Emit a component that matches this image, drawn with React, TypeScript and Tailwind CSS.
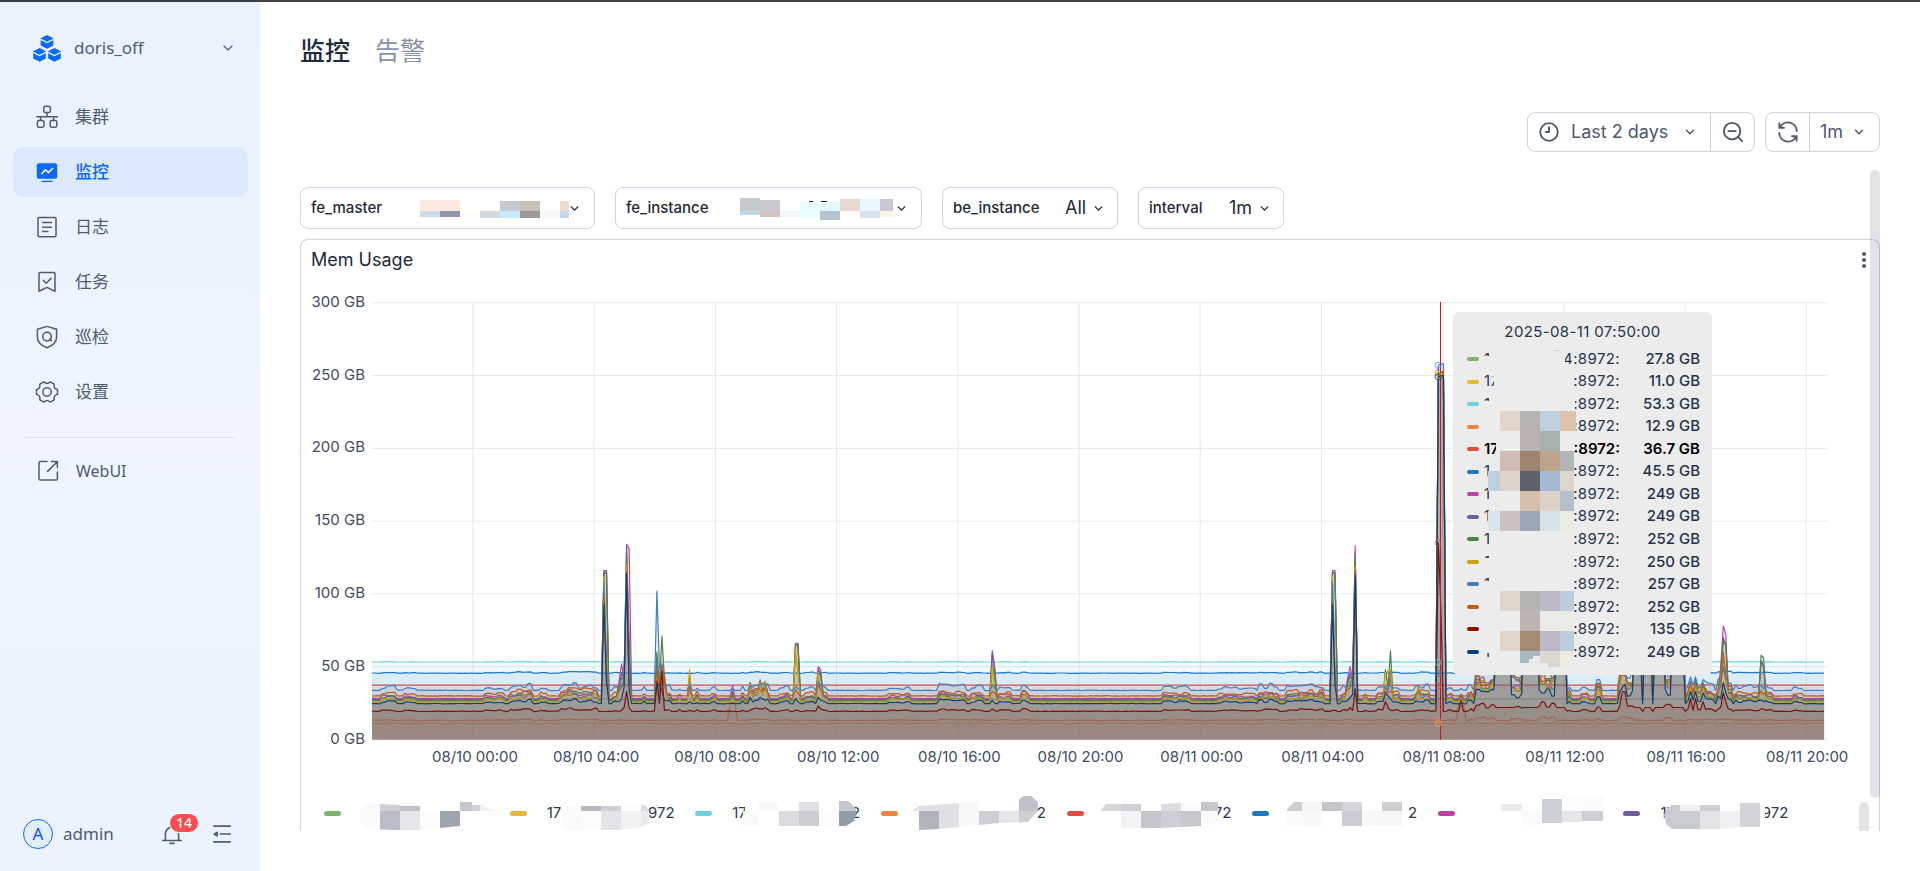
import { useId } from 'react';
import type { ReactNode } from 'react';
import { ChevronDown } from 'lucide-react';

type Block = [x: number, y: number, w: number, h: number, fill: string];

/* ---------- Masked text ---------- */

interface MosaicProps {
  blocks: Block[];
  width: number;
  height: number;
  outline?: string;
  className?: string;
}

function Mosaic({ blocks, width, height, outline, className = '' }: MosaicProps) {
  const id = useId();
  return (
    <svg
      width={width}
      height={height}
      viewBox={`0 0 ${width} ${height}`}
      className={`overflow-visible ${className}`}
      shapeRendering="crispEdges"
      aria-hidden="true"
    >
      {outline && (
        <clipPath id={id}>
          <polygon points={outline} />
        </clipPath>
      )}
      <g clipPath={outline ? `url(#${id})` : undefined}>
        {blocks.map(([x, y, w, h, fill], i) => (
          <rect key={i} x={x} y={y} width={w} height={h} fill={fill} />
        ))}
      </g>
    </svg>
  );
}

/* ---------- Sidebar ---------- */

function Icon({ children, size = 24, width = 1.5 }: { children: ReactNode; size?: number; width?: number }) {
  return (
    <svg
      width={size}
      height={size}
      viewBox="0 0 24 24"
      fill="none"
      stroke="currentColor"
      strokeWidth={width}
      strokeLinecap="round"
      strokeLinejoin="round"
      className="shrink-0"
      aria-hidden="true"
    >
      {children}
    </svg>
  );
}

const navItems = [
  {
    label: '集群',
    icon: (
      <Icon>
        <rect x="8.8" y="1.2" width="6.6" height="6.4" rx="1.4" />
        <path d="M12 7.6v4M1.8 11.8h20.6M5.6 11.8v3.6M18.6 11.8v3.6" />
        <rect x="2.4" y="15.6" width="6.6" height="6.6" rx="1.4" />
        <rect x="15.2" y="15.6" width="6.6" height="6.6" rx="1.4" />
      </Icon>
    ),
  },
  {
    label: '监控',
    active: true,
    icon: (
      <Icon>
        <rect x="1.8" y="3.3" width="20.4" height="15.4" rx="2" fill="currentColor" stroke="none" />
        <path d="M7 21.4h10" strokeWidth="1.4" />
        <path d="M7 13.6l3.4-3.8 3.2 2.8 4-4.2" stroke="#fff" />
      </Icon>
    ),
  },
  {
    label: '日志',
    icon: (
      <Icon>
        <rect x="3" y="2.4" width="18" height="19.4" rx="1.2" />
        <path d="M7.6 7.6h8.8M7.6 12.2h8.8M7.6 16.6h5.2" />
      </Icon>
    ),
  },
  {
    label: '任务',
    icon: (
      <Icon>
        <path d="M4 21.2V3.6c0-.7.5-1.2 1.2-1.2h13.6c.7 0 1.2.5 1.2 1.2v17.6l-8-3.8z" />
        <path d="M8.4 10.4l2.8 2.8 4.8-4.8" />
      </Icon>
    ),
  },
  {
    label: '巡检',
    icon: (
      <Icon>
        <path d="M12 1.4l9.6 2.8v8c0 5-4.2 8.4-9.6 10.6C6.6 20.6 2.4 17.2 2.4 12.2v-8z" />
        <circle cx="12" cy="11.6" r="4.3" />
        <path d="M14.8 13.8l1.6 2" />
      </Icon>
    ),
  },
  {
    label: '设置',
    icon: (
      <Icon>
        <circle cx="12" cy="12" r="4.2" />
        <path d="M8.8 1.9c1 .8 1.9 1.5 3.2 1.5s2.2-.7 3.2-1.5l4 2.3c-.2 1.300-.3 2.400.3 3.500.7 1.100 1.800 1.500 3 2v4.600c-1.200.5-2.300.9-3 2-.6 1.100-.5 2.200-.3 3.500l-4 2.300c-1-.8-1.900-1.500-3.200-1.500s-2.200.7-3.200 1.500l-4-2.300c.2-1.300.3-2.400-.3-3.500-.7-1.100-1.800-1.500-3-2V9.700c1.200-.5 2.300-.9 3-2 .6-1.100.5-2.200.3-3.500z" />
      </Icon>
    ),
  },
];

function Logo() {
  return (
    <svg width="28" height="27" viewBox="0 0 28 27" aria-hidden="true">
      {[
        [14, 7],
        [6.5, 20],
        [21.5, 20],
      ].map(([x, y]) => (
        <g key={x} transform={`translate(${x} ${y})`}>
          <path d="M0-7L6.300-3.700V3.500L0 6.800L-6.300 3.500V-3.700z" fill="#0b68ff" />
          <path d="M-6.300-2.600L0 .5L6.300-2.600" fill="none" stroke="#edf4fe" strokeWidth="1.3" />
        </g>
      ))}
    </svg>
  );
}

function Sidebar() {
  return (
    <aside className="flex w-[260px] shrink-0 flex-col bg-linear-to-b from-[#eaf2fe] via-[#f0f5ff] to-[#ebf3fe] text-[17px] text-[#4e5b73]">
      <button type="button" className="mt-[22px] flex h-12 items-center pr-6 pl-[33px]">
        <Logo />
        <span className="ml-[13px] flex-1 text-left">doris_off</span>
        <ChevronDown size={16} strokeWidth={1.8} />
      </button>

      <nav className="mt-5 flex flex-col gap-[5px] pr-3 pl-[13px]">
        {navItems.map((item) => (
          <a
            key={item.label}
            href="#"
            className={`flex h-[50px] items-center gap-4 rounded-[10px] pl-[22px] ${
              item.active ? 'bg-[#dce8fc] font-medium text-[#0b68ff]' : ''
            }`}
          >
            {item.icon}
            {item.label}
          </a>
        ))}
      </nav>

      <hr className="mx-[25px] mt-5 border-[#dbe1ec]" />

      <a href="#" className="mt-2 flex h-[50px] items-center gap-4 pl-9 text-base">
        <Icon>
          <path d="M11 2.6H4.2c-.7 0-1.200.5-1.200 1.200v16c0 .7.5 1.200 1.200 1.200h16c.7 0 1.200-.5 1.200-1.200V13" />
          <path d="M15.4 2.6h6v6M21 3l-9.400 9.400" />
        </Icon>
        WebUI
      </a>

      <div className="mt-auto mb-[19px] flex h-9 items-center pr-[27px] pl-[23px]">
        <span className="flex size-[30px] items-center justify-center rounded-full border border-[#0b68ff] bg-[#e3effe] text-[#0b50ff]">
          A
        </span>
        <span className="ml-[10px]">admin</span>
        <button type="button" aria-label="通知" className="relative ml-auto">
          <Icon size={22}>
            <path d="M1.8 19h20.4M4.8 19v-7.200a7.200 7.200 0 0 1 14.400 0V19M9.800 22.200h4.400" strokeWidth="1.7" />
          </Icon>
          <span className="absolute -top-[10px] left-2 flex h-5 items-center rounded-full border border-white bg-[#ff4d4f] px-1.5 text-sm leading-none font-medium text-white">
            14
          </span>
        </button>
        <button type="button" aria-label="收起" className="ml-7">
          <Icon size={22} width={1.8}>
            <path d="M3 3.4h18M10 12h11M3 20.6h18" />
            <path d="M3 12l4-2.400v4.800z" fill="currentColor" strokeWidth="1" />
          </Icon>
        </button>
      </div>
    </aside>
  );
}

/* ---------- Toolbar and variables ---------- */

function Toolbar() {
  return (
    <div className="mr-10 flex justify-end gap-2.5 text-lg font-medium text-[#4c586e]">
      <div className="flex h-10 divide-x divide-[#ccd3e2] rounded-lg border border-[#ccd3e2]">
        <button type="button" className="flex w-[183px] items-center pl-[10px]">
          <Icon size={22} width={2}>
            <circle cx="12" cy="12" r="9.6" />
            <path d="M12 6.6V12H8.6" />
          </Icon>
          <span className="ml-[11px] flex-1 text-left font-normal">Last 2 days</span>
          <ChevronDown size={14} strokeWidth={2.5} className="mr-[13px]" />
        </button>
        <button type="button" aria-label="Zoom out" className="flex w-[43px] items-center justify-center">
          <Icon size={22} width={2}>
            <circle cx="11" cy="11" r="9" />
            <path d="M7 11h8M17.5 17.5l4.5 4.5" />
          </Icon>
        </button>
      </div>
      <div className="flex h-10 divide-x divide-[#ccd3e2] rounded-lg border border-[#ccd3e2]">
        <button type="button" aria-label="Refresh" className="flex w-[44px] items-center justify-center">
          <Icon size={22} width={2}>
            <path d="M2.6 2.4v5h5M3.2 7A9.700 9.700 0 0 1 21.600 11M21.400 21.600v-5h-5M20.800 17A9.700 9.700 0 0 1 2.400 13" />
          </Icon>
        </button>
        <div className="relative flex w-[69px] items-center">
          <select aria-label="Refresh interval" className="w-full appearance-none pl-[10px] font-normal outline-none">
            <option>1m</option>
          </select>
          <ChevronDown size={14} strokeWidth={2.5} className="pointer-events-none absolute right-[13px]" />
        </div>
      </div>
    </div>
  );
}

const masterBlocks: Block[] = [
  [0, 5, 40, 11, '#fae9dc'], [0, 16, 20, 6, '#c9dcec'], [20, 16, 20, 6, '#9496ae'],
  [40, 16, 20, 6, '#fdfef6'], [60, 16, 20, 7, '#d1dadf'], [80, 6, 20, 10, '#c6c8d2'],
  [80, 16, 20, 7, '#c8e8fb'], [100, 6, 20, 10, '#c5c1b9'], [100, 16, 20, 7, '#a0969c'],
  [120, 16, 20, 7, '#f6f9f5'], [140, 6, 9, 10, '#eedbd0'], [140, 16, 9, 7, '#c5d9ee'],
];

const instanceBlocks: Block[] = [
  [0, 3, 20, 13, '#c3c8cb'], [20, 5, 20, 11, '#cac9d0'], [0, 16, 20, 4, '#bed7e7'],
  [20, 16, 20, 6, '#d3c2bd'], [40, 16, 20, 6, '#f2f7fb'], [60, 6, 20, 17, '#e9ffff'],
  [80, 7, 20, 9, '#e2f8ff'], [80, 16, 20, 9, '#b6c1d1'], [100, 4, 20, 12, '#e8d6cf'],
  [100, 16, 20, 7, '#fffefa'], [120, 4, 20, 12, '#e6f8fd'], [120, 16, 20, 7, '#d5e2ef'],
  [140, 4, 13, 12, '#c9c9d4'], [140, 16, 13, 6, '#fff4e4'], [69, 6, 4, 1, '#1f2937'],
  [81, 6, 6, 1, '#1f2937'],
];

const variableBox =
  'flex h-[42px] items-center rounded-lg border border-[#ccd3e2] px-[10px] text-[15px] font-medium text-[#1f2937]';

function MaskedVariable({ name, width, children }: { name: string; width: string; children: ReactNode }) {
  return (
    <button type="button" className={`${variableBox} ${width}`}>
      <span>{name}</span>
      <span className="ml-auto">{children}</span>
      <ChevronDown size={13} strokeWidth={2.5} className="mr-[3px] ml-px" />
    </button>
  );
}

function SelectVariable({ name, value, width }: { name: string; value: string; width: string }) {
  return (
    <label className={`relative ${variableBox} ${width}`}>
      <span>{name}</span>
      <select className="ml-auto appearance-none pr-5 text-lg font-normal outline-none">
        <option>{value}</option>
      </select>
      <ChevronDown size={13} strokeWidth={2.5} className="pointer-events-none absolute right-3" />
    </label>
  );
}

/* ---------- Chart ---------- */

// Values in GB; `burst` scales how strongly a series follows the load windows
const series = [
  { color: '#7EB26D', base: 27.8, burst: 0, value: '27.8 GB' },
  { color: '#EAB839', base: 11, burst: 0, value: '11.0 GB' },
  { color: '#6ED0E0', base: 53.2, burst: 0.03, value: '53.3 GB' },
  { color: '#EF843C', base: 13, burst: 0.12, value: '12.9 GB' },
  { color: '#E24D42', base: 37.3, burst: 0.02, value: '36.7 GB', hot: true },
  { color: '#1F78C1', base: 45.4, burst: 0.14, value: '45.5 GB' },
  { color: '#BA43A9', base: 28, burst: 0.8, value: '249 GB' },
  { color: '#705DA0', base: 27.2, burst: 0.7, value: '249 GB' },
  { color: '#508642', base: 26.6, burst: 0.8, value: '252 GB' },
  { color: '#CCA300', base: 25.6, burst: 0.8, value: '250 GB' },
  { color: '#447EBC', base: 33.6, burst: 0.8, value: '257 GB' },
  { color: '#C15C17', base: 29.8, burst: 0.7, value: '252 GB' },
  { color: '#890F02', base: 19.2, burst: 0.3, value: '135 GB' },
  { color: '#0A437C', base: 24.5, burst: 0.5, value: '249 GB' },
];

const SLOTS = 576;
const FIRST_BUSY = 6;

// [from, to, strength]
const load: [number, number, number][] = [
  [3, 10, 4], [12, 18, 3], [44, 53, 4], [54, 64, 7], [66, 70, 4], [74, 90, 8], [95, 100, 4],
  [107, 109, 5], [116, 119, 5], [121, 123, 4], [128, 130, 5], [134, 137, 4], [146, 148, 5],
  [149, 158, 8], [161, 166, 4], [171, 176, 4], [178, 181, 5], [204, 214, 3], [224, 236, 6],
  [237, 243, 5], [248, 254, 4], [257, 261, 6], [313, 325, 4], [335, 351, 3], [351, 360, 6],
  [362, 378, 6], [384, 390, 5], [393, 395, 5], [398, 402, 5], [404, 408, 5], [413, 420, 6],
  [426, 429, 4], [434, 437, 6], [437, 446, 22], [451, 457, 20], [462, 470, 22], [474, 476, 6],
  [485, 488, 18], [479, 483, 4], [494, 501, 22], [512, 516, 20], [521, 533, 8], [533, 540, 10],
  [540, 556, 5], [563, 568, 3],
];

// [slot, magenta, purple, green, yellow, blue, orange, dark red, navy]
const peaks: number[][] = [
  [92, 116, 115, 114, 112, 108, 99, 19, 93],
  [93, 116, 115, 114, 60, 50, 40, 19, 40],
  [98, 40, 37, 36, 32, 35, 33, 19, 26],
  [99, 52, 46, 42, 36, 37, 36, 20, 28],
  [100, 42, 40, 41, 40, 42, 38, 22, 36],
  [101, 134, 133, 126, 120, 114, 115, 33, 114],
  [102, 131, 70, 60, 40, 40, 38, 22, 34],
  [113, 56, 50, 60, 45, 102, 47, 40, 37],
  [114, 35, 34, 36, 30, 50, 32, 25, 38],
  [115, 52, 45, 71, 44, 42, 49, 47, 34],
  [116, 44, 40, 42, 38, 38, 38, 20, 27],
  [126, 38, 37, 44, 48, 38, 35, 20, 26],
  [143, 37, 33, 30, 28, 35, 31, 19, 25],
  [150, 39, 38, 39, 38, 37, 33, 20, 29],
  [154, 41, 40, 40, 39, 38, 34, 21, 29],
  [156, 40, 40, 39, 40, 37, 35, 22, 27],
  [168, 66, 65, 65, 62, 36, 34, 20, 28],
  [169, 66, 65, 65, 45, 35, 32, 20, 26],
  [177, 50, 48, 46, 46, 40, 38, 23, 29],
  [178, 48, 45, 44, 34, 37, 34, 21, 27],
  [246, 58, 61, 51, 50, 37, 33, 21, 27],
  [247, 48, 50, 44, 34, 36, 32, 20, 25],
  [381, 116, 115, 114, 112, 108, 94, 20, 93],
  [382, 116, 114, 114, 50, 45, 40, 20, 38],
  [387, 42, 40, 38, 36, 36, 34, 20, 27],
  [388, 50, 45, 43, 40, 38, 36, 22, 29],
  [389, 42, 41, 41, 40, 42, 38, 20, 31],
  [390, 133, 128, 125, 119, 114, 116, 35, 113],
  [394, 31, 30, 30, 31, 34, 31, 20, 25],
  [402, 36, 36, 48, 46, 36, 33, 26, 32],
  [403, 34, 33, 36, 47, 37, 32, 22, 30],
  [404, 48, 42, 61, 48, 37, 33, 20, 28],
  [415, 34, 33, 35, 37, 37, 32, 20, 26],
  [423, 249, 249, 252, 250, 257, 252, 135, 249],
  [424, 249, 249, 252, 250, 258, 252, 90, 250],
  [425, 250, 248, 252, 251, 258, 253, 19, 250],
  [432, 31, 29, 30, 28, 35, 31, 27, 25],
  [496, 46, 46, 48, 48, 46, 44, 33, 36],
  [497, 46, 46, 48, 48, 46, 44, 33, 38],
  [523, 40, 40, 40, 38, 43, 38, 28, 33],
  [525, 42, 40, 40, 38, 43, 38, 28, 33],
  [528, 39, 38, 38, 36, 41, 36, 26, 32],
  [535, 50, 45, 44, 40, 40, 36, 22, 28],
  [536, 78, 70, 68, 58, 50, 60, 32, 39],
  [537, 72, 64, 66, 40, 42, 44, 26, 32],
  [551, 54, 54, 58, 34, 37, 33, 21, 27],
  [552, 50, 50, 56, 30, 35, 31, 21, 26],
];

// Sustained plateaus on the second day: [first slot, length]
const plateaus = [[446, 6], [457, 6], [470, 4], [501, 3], [505, 3], [509, 4], [516, 5]];
plateaus.forEach(([first, length]) => {
  for (let slot = first; slot < first + length; slot++) {
    const top = 80 + ((slot * 7) % 40);
    peaks.push([slot, top, top - 3, top - 6, top - 9, top - 12, top - 15, 22, top - 20]);
  }
});

const noise = (n: number) => {
  const v = Math.sin(n * 12.9898) * 43758.5453;
  return v - Math.floor(v);
};

const px = (slot: number) => 71 + slot * 2.521;
const py = (gb: number) => 459.5 - gb * 1.456;

const paths = series.map(({ base, burst }, s) => {
  const points: string[] = [];
  for (let slot = 0; slot <= SLOTS; slot++) {
    let v = base + noise(slot + s * 31) * (burst > 0.1 ? 0.3 : 0.05);
    load.forEach(([from, to, strength]) => {
      if (slot > from && slot < to) {
        v += strength * burst * (0.25 + 0.75 * noise(Math.floor(slot / 2) * 3 + (s % 3)));
      }
    });
    if (s >= FIRST_BUSY) {
      peaks.forEach((peak) => {
        if (peak[0] === slot) v = Math.max(peak[s - FIRST_BUSY + 1], base);
      });
    }
    if (s === 3 && ((slot >= 142 && slot <= 144) || (slot >= 431 && slot <= 433))) v = 25;
    points.push(`${px(slot).toFixed(1)} ${py(v).toFixed(1)}`);
  }
  return points.join('L');
});

const ticks = [
  '08/10 00:00', '08/10 04:00', '08/10 08:00', '08/10 12:00', '08/10 16:00', '08/10 20:00',
  '08/11 00:00', '08/11 04:00', '08/11 08:00', '08/11 12:00', '08/11 16:00', '08/11 20:00',
];

function Chart() {
  return (
    <svg viewBox="0 0 1578 500" className="block h-auto w-full" role="img" aria-label="Mem Usage">
      <g fill="#3f4b5f" fontSize="15">
        {[0, 50, 100, 150, 200, 250, 300].map((gb) => (
          <g key={gb}>
            <path d={`M71 ${py(gb)}H1526`} stroke="#e8e8e8" />
            <text x="64" y={py(gb) + 4} textAnchor="end">{`${gb} GB`}</text>
          </g>
        ))}
        {ticks.map((tick, i) => (
          <g key={tick}>
            <path d={`M${172 + i * 121.2} 22V459`} stroke="#e8e8e8" />
            <text x={174 + i * 121.1} y="482" textAnchor="middle">{tick}</text>
          </g>
        ))}
      </g>
      {paths.map((d, i) => (
        <g key={series[i].color}>
          <path d={`M${d}V459.5H71Z`} fill={series[i].color} fillOpacity="0.1" />
          <path d={`M${d}`} fill="none" stroke={series[i].color} strokeWidth="1.2" strokeLinejoin="round" />
        </g>
      ))}
      <path d="M1139.5 22V460" stroke="#c4162a" />
      {[
        [257, '#447EBC'], [252, '#C15C17'], [250, '#CCA300'], [249, '#0A437C'], [135, '#E24D42'],
        [53, '#6ED0E0'], [45.5, '#1F78C1'], [36.7, '#E24D42'], [12.9, '#EF843C'], [11, '#EAB839'],
      ].map(([gb, color]) => (
        <circle key={gb} cx="1137" cy={py(Number(gb))} r="3" fill="none" stroke={String(color)} strokeOpacity="0.7" />
      ))}
    </svg>
  );
}

/* ---------- Tooltip ---------- */

const BG = '#ececec';
const tooltipBlocks: Block[] = [
  [36, 40, 76, 24, BG], [41, 62, 78, 20, BG], [36, 82, 86, 30, BG],
  [43, 112, 78, 44, BG], [36, 156, 85, 160, BG], [35, 316, 86, 22, BG],
  [29, 44, 10, 12, BG], [29, 89, 10, 12, BG], [29, 246, 10, 12, BG], [29, 269, 10, 12, BG], [29, 328, 10, 13, BG],
  [47, 99, 20, 20, '#e2d5c9'], [67, 99, 20, 20, '#b6b4b0'], [87, 99, 20, 20, '#bfcfdf'], [107, 99, 16, 20, '#dbc2ab'],
  [67, 119, 20, 20, '#b9b0b0'], [87, 119, 20, 20, '#a6b0af'],
  [47, 139, 20, 20, '#d0bcb4'], [67, 139, 20, 20, '#9f8371'], [87, 139, 20, 20, '#bca48c'], [107, 139, 14, 20, '#b0b6b7'],
  [35, 159, 12, 20, '#bccfe0'], [47, 159, 20, 20, '#e0d3ca'], [67, 159, 20, 20, '#5b626e'], [87, 159, 20, 20, '#a5b9ce'], [107, 159, 14, 20, '#ded5ce'],
  [67, 179, 20, 20, '#d7bfae'], [87, 179, 20, 20, '#ddd2ca'], [107, 179, 14, 20, '#b4bfc9'],
  [35, 199, 12, 20, '#d8e6ec'], [47, 199, 20, 20, '#ccc0c1'], [67, 199, 20, 20, '#9aa7b7'], [87, 199, 20, 20, '#d6e4ea'], [107, 199, 14, 20, '#ebebe6'],
  [47, 279, 20, 20, '#e2d5c9'], [67, 279, 20, 20, '#b6b4b0'], [87, 279, 20, 20, '#bcbac7'], [107, 279, 14, 20, '#bccbd9'],
  [67, 299, 20, 20, '#bdb3b3'], [87, 299, 34, 20, '#ebebe5'],
  [47, 319, 20, 20, '#e2d5c9'], [67, 319, 20, 20, '#a38a71'], [87, 319, 20, 20, '#bcbac7'], [107, 319, 14, 20, '#bacdd8'],
  [67, 339, 20, 5, '#a9b9c2'], [67, 344, 13, 3, '#a9b9c2'], [67, 347, 9, 4, '#a9b9c2'],
  [87, 339, 20, 12, '#dbd6cf'], [95, 351, 12, 4, '#dbd6cf'], [107, 339, 14, 7, '#ebebdd'], [107, 346, 8, 8, '#ebebdd'],
  [101, 38, 6, 1, '#b5dce8'],
];
const prefixes = ['1', '17', '1', '', '17', '1', '1', '1', '1', '1', '1', '', '', '1'];

function Tooltip() {
  return (
    <div className="absolute top-[72px] left-[1152px] w-[259px] rounded-md bg-[#ececec] pb-3 text-[15px] text-[#24334d]">
      <p className="pt-[9px] text-center leading-[22px] tracking-wide">2025-08-11 07:50:00</p>
      <ul className="mt-[5px] flex h-[315px] flex-col justify-between">
        {series.map(({ color, value, hot }, i) => (
          <li
            key={color}
            className={`flex h-[22px] items-center pr-3 pl-[14px] ${hot ? 'font-semibold text-black' : ''}`}
          >
            <span className="h-1 w-3 rounded-sm" style={{ backgroundColor: color }} />
            <span className="ml-[5px]">{prefixes[i]}</span>
            <span className={`ml-auto w-[60px] text-right ${hot ? '' : 'tracking-wide'}`}>
              {i === 0 ? '4:8972:' : ':8972:'}
            </span>
            <span className={`w-20 text-right ${hot ? '' : 'font-medium'}`}>{value}</span>
          </li>
        ))}
      </ul>
      <Mosaic blocks={tooltipBlocks} width={259} height={363} className="absolute inset-0" />
    </div>
  );
}

/* ---------- Legend ---------- */

const legend: { color: string; head?: string; tail?: string; outline?: string; blocks: Block[] }[] = [
  {
    color: '#7EB26D',
    outline: '-1,13 4,9 19,9 59,11 59,16 99,16 99,7 111,7 111,10 122,10 133,16 99,16 99,31 79,33 79,35 30,35 2,33 -1,28',
    blocks: [
      [-1, 9, 20, 26, '#fafafa'], [19, 9, 20, 7, '#cdd0d4'], [19, 16, 20, 19, '#b9bdc7'], [39, 11, 20, 5, '#bfc2ca'],
      [39, 16, 20, 19, '#e5e6e9'], [59, 16, 20, 19, '#fcfcfd'], [79, 16, 20, 17, '#9fa5ae'], [99, 7, 12, 9, '#c4c7cd'],
      [111, 10, 8, 6, '#cdcfd4'], [119, 10, 14, 6, '#f0f1f3'],
    ],
  },
  {
    color: '#EAB839',
    head: '17',
    tail: '972',
    outline: '14,15 17,11 94,11 94,9 99,11 102,16 102,28 94,32 74,35 20,35 15,31',
    blocks: [
      [14, 9, 20, 26, '#fafafa'], [34, 11, 20, 5, '#b3b7be'], [34, 16, 20, 19, '#fcfcfc'], [54, 11, 20, 5, '#cdd0d6'],
      [54, 16, 20, 19, '#e3e4e7'], [74, 11, 20, 5, '#fcfcfc'], [74, 16, 20, 19, '#f0f1f2'], [94, 9, 8, 7, '#dcdde1'],
      [94, 16, 8, 19, '#eaebee'],
    ],
  },
  {
    color: '#6ED0E0',
    head: '17',
    tail: '2',
    outline: '11,9 27,9 27,7 87,7 87,14 107,14 107,6 116,6 122,11 125,16 122,26 114,31 11,31',
    blocks: [
      [13, 9, 14, 7, '#ffffff'], [11, 16, 16, 15, '#fafafa'], [27, 7, 20, 9, '#f8faf9'], [47, 16, 20, 15, '#dadadf'],
      [67, 7, 20, 9, '#dedee3'], [67, 16, 20, 15, '#cdcdd4'], [87, 16, 20, 15, '#fcfcfc'], [107, 6, 18, 10, '#c5c8ce'],
      [107, 16, 18, 15, '#959ba6'],
    ],
  },
  {
    color: '#EF843C',
    tail: '2',
    outline: '-6,16 1,11 41,8 61,6 61,16 101,16 101,4 106,1 113,1 120,7 120,16 110,27 81,28 61,30 21,34 1,35 1,16',
    blocks: [
      [-6, 6, 47, 10, '#e0e1e4'], [1, 16, 20, 19, '#b0b4bc'], [21, 16, 20, 18, '#dfe0e3'], [41, 6, 20, 28, '#f8f8f8'],
      [61, 16, 20, 14, '#cccfd6'], [81, 16, 20, 13, '#e5e6e9'], [101, 1, 19, 15, '#bfc2c8'], [101, 16, 19, 12, '#cdcfd5'],
    ],
  },
  {
    color: '#E24D42',
    tail: '72',
    outline: '-4,16 2,9 57,9 97,7 114,7 114,27 97,31 77,32 57,33 17,33 17,16',
    blocks: [
      [-4, 9, 21, 7, '#d6d8dc'], [17, 9, 20, 7, '#cdd0d4'], [17, 16, 20, 17, '#f2f3f5'], [37, 16, 20, 17, '#c4c6cb'],
      [57, 8, 20, 8, '#dcdde1'], [57, 16, 20, 17, '#cccfd5'], [77, 8, 20, 8, '#fafafa'], [77, 16, 20, 16, '#c5c7cc'],
      [97, 7, 17, 9, '#c5c7cc'], [97, 16, 17, 15, '#fafafa'],
    ],
  },
  {
    color: '#1F78C1',
    tail: '2',
    outline: '-2,14 5,7 113,7 113,31 -2,31',
    blocks: [
      [-2, 7, 15, 9, '#cdced4'], [-2, 16, 15, 15, '#fafafa'], [13, 7, 20, 9, '#f5f5f6'], [13, 16, 20, 15, '#f8f8f8'],
      [33, 7, 20, 9, '#c2c5c9'], [53, 7, 20, 9, '#d5d5da'], [53, 16, 20, 15, '#cacbd2'], [73, 16, 20, 15, '#f6f8f8'],
      [93, 7, 20, 9, '#cdd0d3'], [93, 16, 20, 15, '#f3f6f5'],
    ],
  },
  {
    color: '#BA43A9',
    blocks: [
      [26, 9, 21, 7, '#ebebec'], [47, 16, 20, 14, '#fafafa'], [67, 4, 20, 24, '#cdd0d5'], [87, 3, 20, 13, '#fcfcfc'],
      [87, 16, 20, 11, '#e5e6e9'], [107, 2, 21, 14, '#fafafa'], [107, 16, 21, 10, '#cccfd4'],
    ],
  },
  {
    color: '#705DA0',
    head: '17',
    tail: '972',
    outline: '4,20 7,13 12,10 80,10 80,8 105,8 105,32 80,32 60,34 12,34 6,29',
    blocks: [
      [4, 10, 16, 24, '#c8cbd0'], [20, 10, 20, 6, '#eeeff1'], [20, 16, 20, 18, '#c8cbd0'], [40, 10, 20, 6, '#cdd0d4'],
      [40, 16, 20, 18, '#e3e4e6'], [60, 10, 20, 6, '#ffffff'], [60, 16, 20, 18, '#efeff1'], [80, 8, 20, 24, '#d3d3d8'],
      [100, 8, 5, 24, '#ffffff'],
    ],
  },
];

function Legend() {
  return (
    <div className="relative">
      <ul className="grid grid-cols-8 pt-[21px] pr-[70px] pb-10 pl-[23px] text-[15px] text-[#2c384c]">
        {legend.map(({ color, head, tail, outline, blocks }) => (
          <li key={color} className="flex h-6 items-center">
            <span className="h-[5px] w-[17px] shrink-0 rounded-full" style={{ backgroundColor: color }} />
            <span className="relative ml-5 flex h-6 w-[128px] shrink-0 items-center justify-between">
              <span>{head}</span>
              <span>{tail}</span>
              <Mosaic blocks={blocks} outline={outline} width={128} height={36} className="absolute -top-[6px] left-0" />
            </span>
          </li>
        ))}
      </ul>
      <div className="absolute top-[22px] right-[10px] h-16 w-[10px] rounded-full bg-[#e3e4e6]" />
    </div>
  );
}

/* ---------- Page ---------- */

function MemPanel() {
  return (
    <section className="relative mt-[10px] rounded-t-lg border border-b-0 border-[#ccd3e2]">
      <header className="flex h-10 items-center justify-between pr-[13px] pl-[10px]">
        <h2 className="text-lg text-[#1f2937]">Mem Usage</h2>
        <button type="button" aria-label="Menu" className="text-[#4c586e]">
          <svg width="4" height="16" viewBox="0 0 4 16" fill="currentColor" aria-hidden="true">
            <circle cx="2" cy="2" r="2" />
            <circle cx="2" cy="8" r="2" />
            <circle cx="2" cy="14" r="2" />
          </svg>
        </button>
      </header>
      <Chart />
      <Legend />
      <Tooltip />
    </section>
  );
}

export default function App() {
  return (
    <div className="flex h-screen overflow-hidden border-t-2 border-[#3f3f41] bg-white font-['Noto_Sans','Noto_Sans_CJK_SC',sans-serif]">
      <Sidebar />
      <main className="flex min-w-0 flex-1 flex-col pb-10 pl-10">
        <div role="tablist" className="flex gap-[25px] pt-[30px] text-[25px] leading-9">
          <button type="button" role="tab" aria-selected="true" className="font-medium text-[#1f2a3d]">
            监控
          </button>
          <button type="button" role="tab" aria-selected="false" className="text-[#8592a6]">
            告警
          </button>
        </div>

        <div className="mt-11 flex min-h-0 flex-1 flex-col font-['Inter','Noto_Sans_CJK_SC',sans-serif]">
          <Toolbar />
          <div className="relative mt-[18px] mr-10 min-h-0 flex-1 overflow-hidden">
            <div className="flex gap-5 pt-[17px]">
              <MaskedVariable name="fe_master" width="w-[295px]">
                <Mosaic blocks={masterBlocks} width={147} height={26} />
              </MaskedVariable>
              <MaskedVariable name="fe_instance" width="w-[307px]">
                <Mosaic blocks={instanceBlocks} width={154} height={26} />
              </MaskedVariable>
              <SelectVariable name="be_instance" value="All" width="w-[176px]" />
              <SelectVariable name="interval" value="1m" width="w-[146px]" />
            </div>
            <MemPanel />
            <div className="absolute top-0 right-0 h-[95%] w-[10px] rounded-full bg-[#3c465a]/15" />
          </div>
        </div>
      </main>
    </div>
  );
}
